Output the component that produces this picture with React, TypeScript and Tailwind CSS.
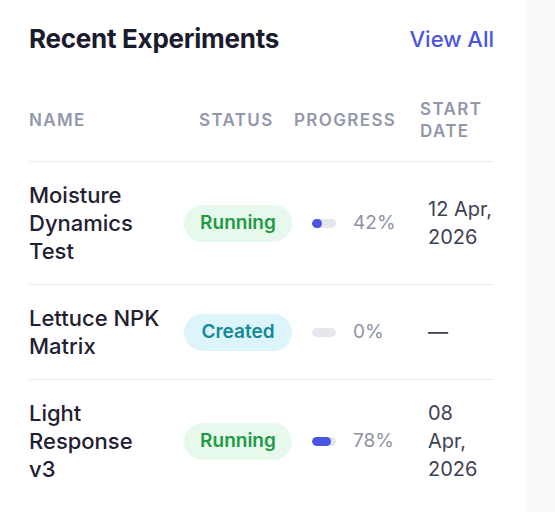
import type { ReactNode } from "react";

type Row = {
  name: string;
  status: "Running" | "Created";
  progress: number;
  date: ReactNode;
};

const rows: Row[] = [
  {
    name: "Moisture Dynamics Test",
    status: "Running",
    progress: 42,
    date: (
      <>
        12 Apr,
        <br />
        2026
      </>
    ),
  },
  { name: "Lettuce NPK Matrix", status: "Created", progress: 0, date: "—" },
  {
    name: "Light Response v3",
    status: "Running",
    progress: 78,
    date: (
      <>
        08
        <br />
        Apr,
        <br />
        2026
      </>
    ),
  },
];

const StatusPill = ({ status }: { status: Row["status"] }) => {
  const tone =
    status === "Running" ? "bg-[#e7f8ec] text-[#1f9b45]" : "bg-[#dcf5fa] text-[#15889a]";
  return (
    <span className={`inline-flex h-[37px] w-[108px] items-center justify-center rounded-full text-[19px] font-semibold ${tone}`}>
      {status}
    </span>
  );
};

const Progress = ({ value }: { value: number }) => (
  <div className="flex items-center pl-[18px]">
    <div className="h-[9px] w-[24px] overflow-hidden rounded-full bg-[#e6e7ec]">
      <div className="h-full rounded-full bg-[#4a56e2]" style={{ width: `${value}%`, minWidth: value > 0 ? 9 : 0 }} />
    </div>
    <span className="ml-[17px] text-[19px] text-[#8e93a3]">{value}%</span>
  </div>
);

export default function App() {
  return (
    <div className="min-h-[512px] w-[555px] bg-[#f9f9fb] font-['Inter',sans-serif]">
      <div className="min-h-[512px] w-[527px] bg-white pl-[29px] pr-[33px] pt-[20px]">
        <div className="flex items-center justify-between">
          <h2 className="text-[26px] font-bold leading-[38px] tracking-[-0.01em] text-[#1a1c2e]">Recent Experiments</h2>
          <a className="text-[22px] font-medium text-[#4a56e2]">View All</a>
        </div>

        <div className="mt-[40px] grid grid-cols-[155px_110px_126px_1fr] items-center border-b border-[#ebebef] pb-[19px] text-[17px] font-semibold uppercase leading-[22px] tracking-[0.08em] text-[#9298aa]">
          <div>Name</div>
          <div className="pl-[15px]">Status</div>
          <div>Progress</div>
          <div>Start Date</div>
        </div>

        {rows.map((row, i) => (
          <div
            key={row.name}
            className={`grid grid-cols-[155px_110px_126px_1fr] items-center py-[19px] ${i < rows.length - 1 ? "border-b border-[#ebebef]" : ""}`}
          >
            <div className="w-[133px] text-[22px] font-medium leading-[28px] text-[#1f2133]">{row.name}</div>
            <div>
              <StatusPill status={row.status} />
            </div>
            <Progress value={row.progress} />
            <div className="pl-[8px] text-[20px] leading-[28px] text-[#3d4252]">{row.date}</div>
          </div>
        ))}
      </div>
    </div>
  );
}
